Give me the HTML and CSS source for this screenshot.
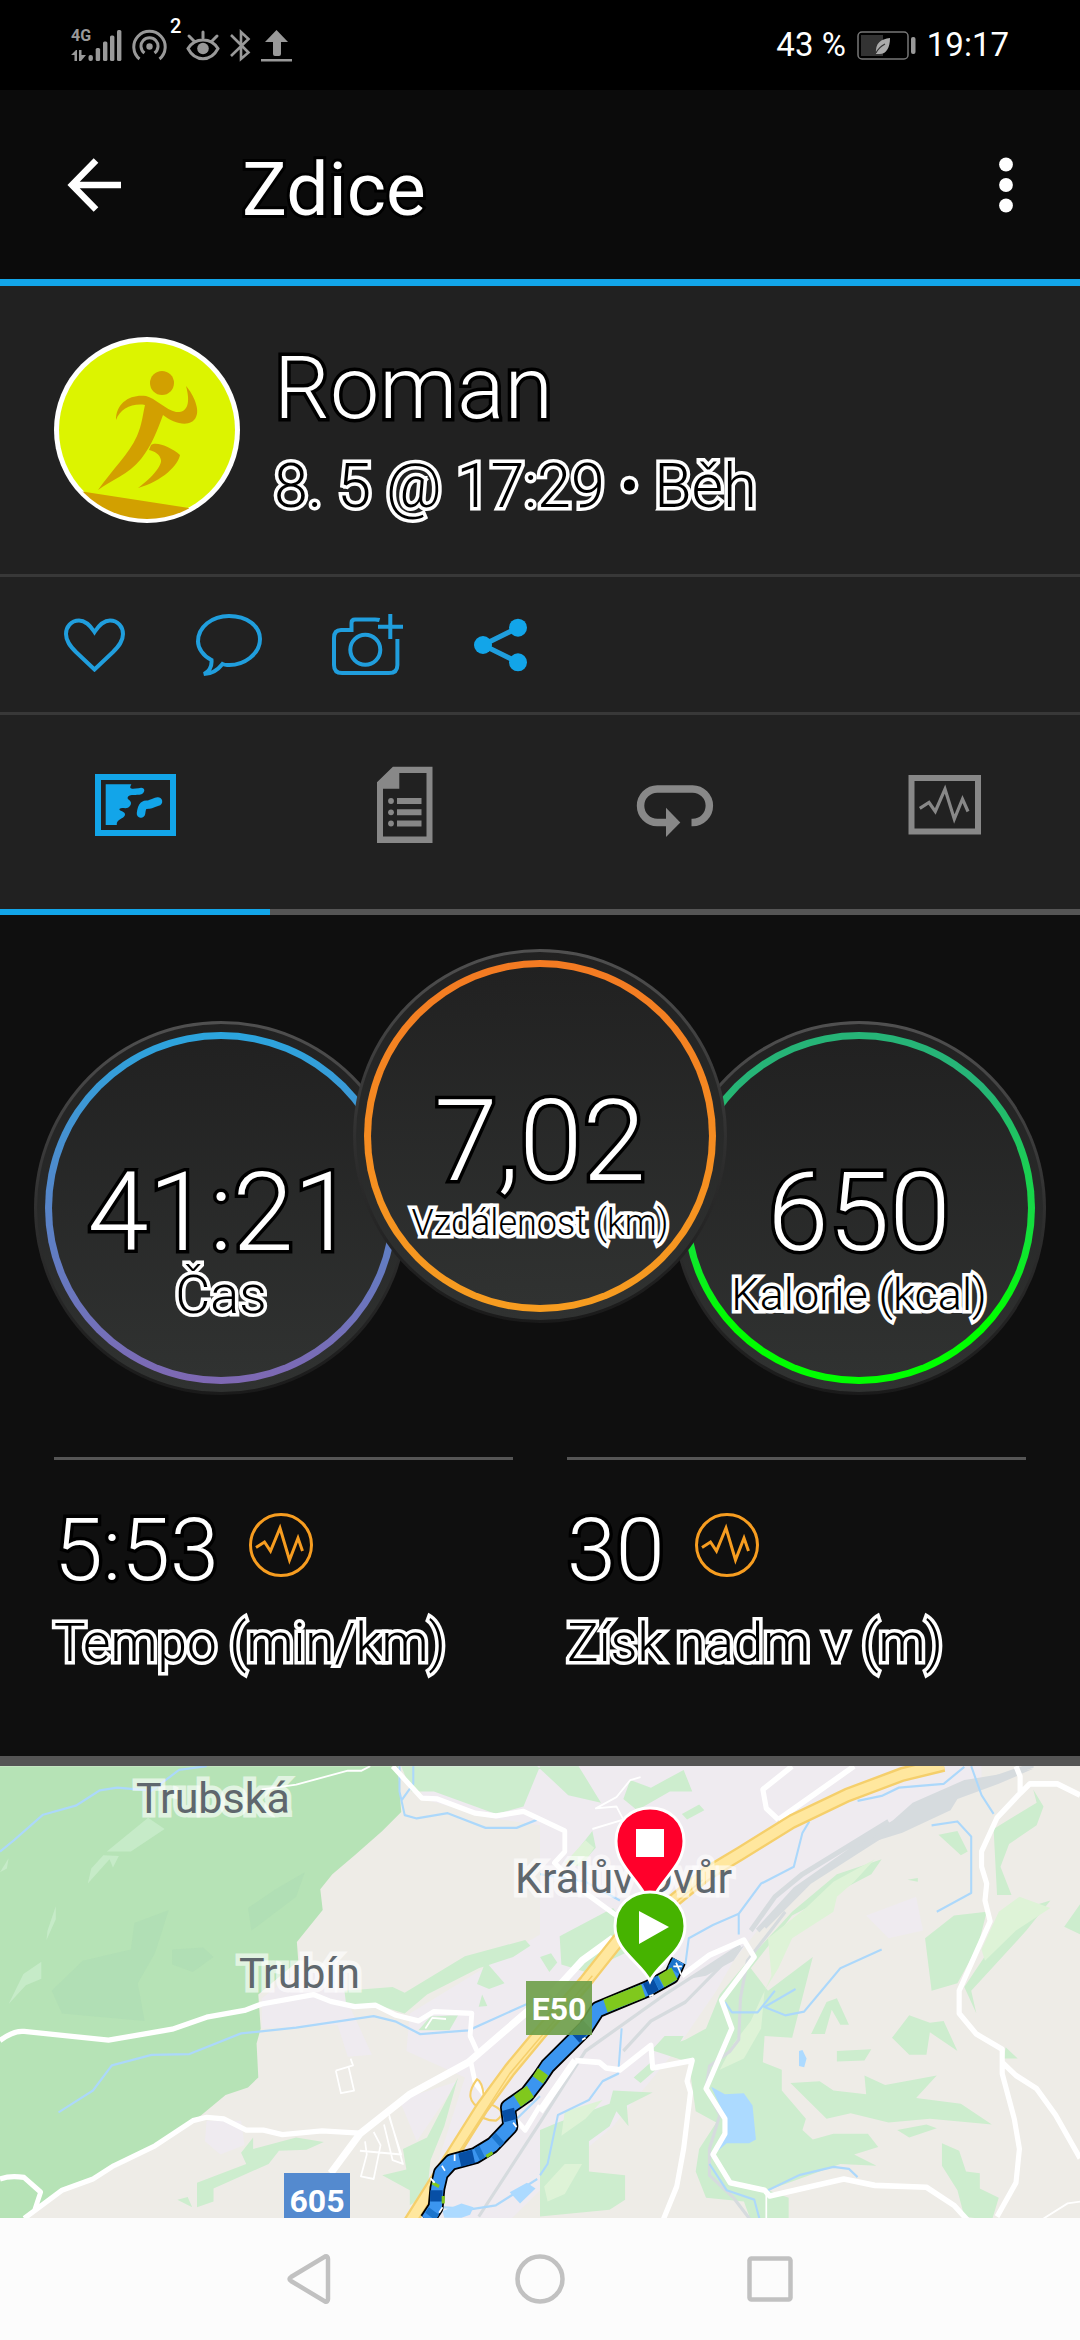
FILE: index.html
```html
<!DOCTYPE html>
<html lang="cs">
<head>
<meta charset="utf-8">
<meta name="viewport" content="width=device-width">
<title>Zdice</title>
<link rel="stylesheet" href="styles.css">
</head>
<body>
<div class="status">
  <div class="status-icons">
    <span class="network"><span class="network-type">4G</span>
      <svg width="51" height="33" viewBox="0 0 51 33" fill="#999"><path d="M0 26l5-5h1v11H3.500v-6zM8 21h2.500v5H15l-5 6H8z"/><rect x="17.500" y="26" width="4.400" height="6" rx="2"/><rect x="24.700" y="19" width="4.400" height="13" rx="1.500"/><rect x="32" y="12.500" width="4.400" height="19.500" rx="1.500"/><rect x="39" y="6.500" width="4.400" height="25.500" rx="1.500"/><rect x="46" y="1" width="4.400" height="31" rx="1.500"/></svg></span>
    <span class="hotspot"><svg width="35" height="33" viewBox="0 0 35 33" fill="none" stroke="#999" stroke-width="3"><circle cx="17.500" cy="17.500" r="3.200" fill="#999" stroke="none"/><path d="M12.500 24a8.500 8.500 0 1 1 10 0M7.500 30a15.700 15.700 0 1 1 20 0"/></svg><span class="hotspot-count">2</span></span>
    <svg width="34" height="33" viewBox="0 0 34 33" fill="none" stroke="#999" stroke-width="3" stroke-linecap="round"><path d="M2 19.500C9 8 25 8 32 19.500C25 33 9 33 2 19.500ZM17 9V3M8 12L3 7M26 12l5-5"/><circle cx="17" cy="19.500" r="5.800" fill="#999" stroke="none"/></svg>
    <svg width="21" height="33" viewBox="0 0 21 33" fill="none" stroke="#999" stroke-width="2.600"><path d="M1 6l17.500 17.500L11 30V3l7.500 7L1 27"/></svg>
    <svg width="31" height="33" viewBox="0 0 31 33" fill="#999"><path d="M15.500 1L27 13h-7v12q0 2-2 2h-4q-2 0-2-2V13H4zM0 30h31v2.500H0z"/></svg>
  </div>
  <div class="status-right">
    <span>43 %</span>
    <svg width="59" height="29" viewBox="0 0 59 29"><rect x="1" y="1" width="50" height="27" rx="4" fill="none" stroke="#777" stroke-width="1.500"/><rect x="4" y="4" width="22" height="21" fill="#333"/><rect x="54" y="6" width="4.500" height="17" rx="2" fill="#999"/><path d="M19 23C18 12 24 8 33 7C33 17 29 24 21 23Z" fill="#aaa"/><path d="M19 22Q22 16 28 13" fill="none" stroke="#333" stroke-width="1.200"/></svg>
    <time>19:17</time>
  </div>
</div>

<header class="header">
  <button class="plain" aria-label="Zpět"><svg width="54" height="54" viewBox="0 0 54 54" fill="none" stroke="#fff" stroke-width="6.500"><path d="M54 27H6M29 2.500L5 27l24 24.500"/></svg></button>
  <h1 class="title">Zdice</h1>
  <button class="plain" aria-label="Nabídka"><svg width="14" height="56" viewBox="0 0 14 56" fill="#fff"><circle cx="7" cy="7.500" r="6.900"/><circle cx="7" cy="28" r="6.900"/><circle cx="7" cy="48.500" r="6.900"/></svg></button>
</header>

<main>
  <section class="profile">
    <svg class="avatar" width="186" height="186" viewBox="0 0 186 186">
      <defs><clipPath id="face"><circle cx="93" cy="93" r="89"/></clipPath></defs>
      <circle cx="93" cy="93" r="93" fill="#fff"/><circle cx="93" cy="93" r="88" fill="#dcf400"/>
      <g fill="#d2a000"><path clip-path="url(#face)" d="M25 154L135 171V190H25Z"/><circle cx="108" cy="46" r="12"/>
      <path d="M62 83C62 66 76 57 92 59C101 61 112 73 122 75C133 76 137 67 132 49C140 58 146 73 142 80C137 91 120 87 109 78C103 94 98 108 87 122C74 138 57 143 44 153C58 133 75 117 83 99C88 88 89 76 91 68C78 66 66 72 62 83Z"/>
      <path d="M97 108C103 104 118 111 126 118C124 128 109 144 84 151C99 140 108 128 107 123C106 117 100 114 95 113Z"/></g>
    </svg>
    <div class="profile-text">
      <h2 class="name">Roman</h2>
      <p class="when outlined">8. 5 @ 17:29 • Běh</p>
    </div>
  </section>

  <div class="actions">
    <button class="plain" aria-label="To se mi líbí"><svg width="62" height="54" viewBox="0 0 62 54"><path d="M30.500 14C26 7 21 2.500 15 2.500C7 2.500 2 9 2 16C2 23 6 28 12 34L30.500 51.500L49 34C55 28 59 23 59 16C59 9 54 2.500 46 2.500C40 2.500 35 7 30.500 14Z"/></svg></button>
    <button class="plain" aria-label="Komentář"><svg width="66" height="62" viewBox="0 0 66 62"><path d="M15.500 46C7 42 2 34 2 27.500C2 13 16 2 33 2C51 2 64 12 64 25C64 40 48 52 31 51Q29 51 26.500 50C21 57 15 60 8 60C14 57 16 52 15.500 46Z"/></svg></button>
    <button class="plain" aria-label="Přidat fotku"><svg width="72" height="62" viewBox="0 0 72 62"><path d="M47.600 6Q46 5.500 43 5.500H23Q19.500 5.500 19.500 9V16H9Q2 16 2 24V51Q2 59 10 59H57Q65.400 59 65.400 51V25M58.300 0V25M46 12.700H71"/><circle cx="33.300" cy="35.700" r="15"/></svg></button>
    <button class="plain" aria-label="Sdílet"><svg width="54" height="54" viewBox="0 0 54 54"><path d="M44 9.700L9 27L44 44.300" stroke-width="5"/><g fill="#12a5e9" stroke="none"><circle cx="44" cy="9.700" r="9"/><circle cx="9" cy="27" r="9"/><circle cx="44" cy="44.300" r="9"/></g></svg></button>
  </div>

  <nav class="tabs" role="tablist">
    <button class="plain tab tab-active" role="tab" aria-selected="true" aria-label="Mapa"><svg width="90" height="80" viewBox="0 0 90 80" fill="currentColor"><path d="M8 12H83V68H8Z" fill="none" stroke="currentColor" stroke-width="6"/><path d="M15.700 19.300H41.400C38 25 43 24 48.600 23.300C53 21 57 25 52 29C49 31 36 28 37.900 34C43 37 41 41 37.900 42.700C35 44 32 42 29.600 43.700C28 46 36 46 35 50C34 54 26 54 26.800 60H15.700Z"/><path d="M51 48.500C52 40 54 39.500 59 39.500C62 39 65 37 68 36.500" fill="none" stroke="currentColor" stroke-width="8.500" stroke-linecap="round"/></svg></button>
    <button class="plain tab" role="tab" aria-label="Podrobnosti"><svg width="90" height="80" viewBox="0 0 90 80" fill="currentColor"><path fill-rule="evenodd" d="M17 17.300L32.900 1.700H72.500V78H17ZM39.300 8V23.700H23V71.500H66.500V8Z"/><circle cx="31" cy="36" r="2.900"/><circle cx="31" cy="47.300" r="2.900"/><circle cx="31" cy="58.500" r="2.900"/><path d="M37 33h24.500v6H37zM37 44.300h24.500v6H37zM37 55.500h24.500v6H37z"/></svg></button>
    <button class="plain tab" role="tab" aria-label="Kola"><svg width="90" height="80" viewBox="0 0 90 80" fill="currentColor"><path d="M61.500 57.500H62.600A16.700 16.700 0 0 0 62.600 24H27.300A16.700 16.700 0 0 0 27.300 57.500H38" fill="none" stroke="currentColor" stroke-width="7.500"/><path d="M36 42.700L50.300 57.500L36 72Z"/></svg></button>
    <button class="plain tab" role="tab" aria-label="Grafy"><svg width="90" height="80" viewBox="0 0 90 80" fill="none" stroke="currentColor"><path d="M11.500 13H78V66.500H11.500Z" stroke-width="6"/><path d="M19.800 43.300L29 37.500L35.300 46.500L45 24L54.300 54L62.500 34L68 46.500" stroke-width="3.200"/></svg></button>
  </nav>

  <section class="dials">
    <div class="dial"><div class="ring ring-time"><span class="dial-value">41:21</span><span class="dial-label outlined">Čas</span></div></div>
    <div class="dial dial-main"><div class="ring ring-distance"><span class="dial-value dial-value-main">7,02</span><span class="dial-label dial-label-small outlined">Vzdálenost (km)</span></div></div>
    <div class="dial"><div class="ring ring-calories"><span class="dial-value">650</span><span class="dial-label dial-label-medium outlined">Kalorie (kcal)</span></div></div>
  </section>

  <section class="stats">
    <div class="stat">
      <div class="stat-row"><span class="stat-value">5:53</span><svg class="pulse" width="64" height="64" viewBox="0 0 64 64"><circle cx="32" cy="32" r="30.500"/><path d="M7 34.500L15.500 29L21.500 38L31 15L40.500 47L49 25L53.500 38"/></svg></div>
      <p class="stat-label outlined">Tempo (min/km)</p>
    </div>
    <div class="stat">
      <div class="stat-row"><span class="stat-value">30</span><svg class="pulse" width="64" height="64" viewBox="0 0 64 64"><circle cx="32" cy="32" r="30.500"/><path d="M7 34.500L15.500 29L21.500 38L31 15L40.500 47L49 25L53.500 38"/></svg></div>
      <p class="stat-label outlined">Získ nadm v (m)</p>
    </div>
  </section>

  <svg class="map" viewBox="0 16 1080 452" preserveAspectRatio="xMidYMid slice" role="img" aria-label="Mapa trasy">
    <g transform="scale(.3444 .3763)" stroke-linejoin="round">
      <rect width="3140" height="1300" fill="#eeece7"/>
      <!-- built-up areas -->
      <g fill="#efebf0">
        <path d="M1200 40H1700L2850 40V90L2600 200L2250 420L2130 560L2080 640L1960 800L1780 1000L1600 1140L1480 1250H1190L1270 1100L1350 870L1180 800L1190 700L1440 560L1568 490V200L1420 180L1230 130Z"/>
        <path d="M760 660L860 590H1000L1010 670L1080 810L1010 815L980 730L760 740Z"/><path d="M600 985H700L710 1050L640 1075L595 1040ZM1160 930L1330 880L1210 1040ZM2515 440L2660 390L2680 480L2580 500Z"/>
      </g>
      <!-- forests -->
      <path fill="#b6e3b6" d="M0 43H1155L1165 165L1110 215L1030 280L965 330L930 370L937 425L862 510L866 560L750 650L757 740L745 780L750 870L720 897L655 917L585 970L440 1060L270 1140L170 1180L70 1250H0Z"/>
      <path fill="#aedcb4" opacity=".6" d="M720 420L800 370L885 325L860 390L730 480ZM240 560L380 530L390 460L490 425L450 540L400 620L420 720L180 700L150 640ZM500 530L590 525L620 550L560 590L500 570Z"/>
      <path fill="#c6ebc8" d="M310 270L430 180L478 210L380 270ZM255 355L265 315L300 280L345 282L328 312L318 290ZM135 505L138 480L162 415V450ZM25 675L68 595L120 563V608L75 625ZM0 325L25 288L20 315Z"/>
      <!-- light green fields -->
      <g fill="#cdedce">
        <path d="M1165 43H1560L1650 120L1745 140L1680 43H1568L1520 150L1440 170L1260 110L1195 110ZM1000 640L1140 630L1175 645L1350 548L1525 505L1540 520L1490 550L1390 580L1240 650L1175 700L1140 690L1085 675H1005ZM1385 622L1410 562L1465 620L1420 635ZM1400 650L1415 680L1390 682ZM1215 745L1250 708L1330 705L1305 745ZM700 1070L735 1030V1060L860 1030L940 1042L890 1062L810 1065L780 1100L620 1165V1200L572 1215V1150L715 1100ZM1170 1060L1240 1030L1330 870L1290 1000L1250 1090L1240 1180L1190 1210V1170L1110 1130L1180 1115ZM515 1195L545 1188L558 1215Z"/>
        <path d="M1830 80L1890 100L1985 53L2010 110L1945 110L1850 160L1810 130ZM1980 170L2030 145L2045 160L1995 185ZM1625 495L1780 420L1860 520L1700 590L1630 570ZM1660 285L1720 215L1730 260L1700 290ZM1568 550L1600 540L1618 565L1595 590Z"/>
        <path d="M2090 650L2050 740L1990 770L1900 800L2000 830L2020 960L2080 990L2030 1060L2020 1120L2050 1190L2160 1200L2180 1250H2290V1190L2230 1170L2440 1100L2545 1105L2480 1075L2550 1055L2520 1020H2420L2360 1035L2330 1010L2340 980L2270 905V850L2215 830L2220 760L2300 765L2360 550L2230 640L2180 580L2300 440L2530 330L2560 290L2430 330L2300 430L2190 540Z"/>
        <path d="M2686 500L2770 440L2865 430L2840 520L2780 620L2705 640ZM2725 225L2780 215L2810 270L2790 280ZM2885 210L3010 140L3000 105L3030 150L3010 200L2930 250L2905 310L2937 385H2895ZM2800 630L2880 520L2940 430L3050 400L2980 480L2820 640L2835 700ZM3090 470L3136 410V490ZM2355 755L2400 670L2430 660L2465 730L2440 730L2415 690L2395 755ZM2590 765L2640 705L2700 725L2740 720L2780 800L2700 750L2690 810H2640ZM2295 885L2380 880L2420 905L2515 915L2510 865L2570 890L2720 865L2660 925L2790 940L2880 995L2700 980L2580 990L2470 965L2400 980ZM2430 800L2530 795L2510 825L2430 828ZM2605 1010L2690 995L2720 1005L2640 1030ZM2735 1045L2785 1065L2805 1120L2845 1125V1165L2900 1190L2880 1250L2800 1240L2780 1170L2735 1105ZM2915 820L2920 790L2955 820ZM2635 345L2665 340V350Z"/>
        <path d="M1568 1010L1620 990L1770 940L1780 905L1895 910L1820 945L1825 1000L1790 960L1770 1000L1710 1040V1120L1815 1130V1195L1770 1222L1568 1240ZM1890 800L1930 760H1985L1960 800ZM1840 870L1890 830L1910 845L1860 885Z"/>
      </g>
      <path fill="#def3d7" d="M2180 720L2240 600L2230 500L2340 420L2420 350L2540 290L2480 350L2430 390L2420 430L2300 500L2260 580L2220 640L2210 740L2160 820L2090 850L2130 780ZM2850 530L2900 430L2960 390L3050 420L2950 480L2860 560ZM1640 960L1750 930L1700 980L1630 1025ZM1580 1160L1640 1100L1690 1100L1640 1180L1590 1200ZM1640 300L1700 240L1725 260L1690 310Z"/>
      <!-- railways -->
      <g fill="none" stroke="#d6dbde" stroke-width="9">
        <path d="M3000 40L2780 110L2560 210L2310 370L2200 480M2580 190L2330 330L2250 390L2180 480M2640 180L2350 350L2220 470" stroke-width="14"/>
        <path d="M2280 430L2170 560L2150 660L2145 770L2120 800L2060 840L2050 900L2090 970L2060 1060L2060 1130L2130 1190L2180 1250M2150 520L1930 650L1700 800L1568 990L1390 1240M2130 540L1990 670L1890 720L1810 800"/>
      </g>
      <path fill="#d6dbde" d="M2540 230L2650 140L2800 80L3000 50L2900 90L2780 130L2760 160L2620 220L2480 260ZM1990 610L2160 520L2130 560L2050 600Z"/>
      <!-- rivers and ponds -->
      <g fill="none" stroke="#acd8fb" stroke-width="6">
        <path d="M0 270L40 240L125 172L220 148L290 107L340 100L440 108L520 53L600 43M170 963L270 905L325 838L440 810L550 808L700 753L860 738L1085 707L1150 722L1220 755L1360 745L1530 675M1160 43V110L1175 173L1210 182L1300 168L1410 207H1500L1560 185M1200 43V90L1165 135"/>
        <path d="M2350 190L2330 220L2305 310L2210 355L2145 435L2070 465L2000 500L1990 570M2145 435V490M2800 45L2740 90L2610 100L2560 122L2490 135M2820 43L2850 120L2885 170M2705 200L2780 190L2820 230V380L2720 430M2560 530L2440 580L2335 695L2280 705L2220 683L2310 635M2105 670L2125 697H2200L2250 640M1805 740L1795 860L1750 880L1710 930L1620 970L1590 1100L1568 1130M2230 1170L2320 1130L2420 1108L2465 1113L2490 1135M2060 1100L2110 1170L2190 1195L2205 1245M1280 1215L1370 1220L1440 1210L1560 1140M1568 330L1700 350L1800 400M1568 920L1495 985"/>
      </g>
      <path fill="#acdaff" d="M2065 895L2105 915L2160 912L2185 945L2195 1035L2175 1045H2110L2065 1080L2105 1015L2095 955ZM2320 800L2330 797L2342 820L2335 843L2320 840ZM1285 1225L1340 1205L1375 1215L1365 1235L1340 1243H1290ZM1480 1175L1530 1150L1555 1165L1510 1205Z"/>
      <!-- local roads -->
      <g fill="none" stroke="#fff" stroke-width="14">
        <path d="M0 772Q40 745 70 748L315 771L500 742L600 710L710 692L760 675L910 650L960 668L1030 682L1090 678L1150 705L1215 720L1260 695L1370 700L1365 760L1385 800M0 1140Q30 1130 70 1136L118 1175L100 1225M70 1245L180 1170L270 1140L330 1105L450 1052L560 985L600 976L650 980L715 1010H765L820 1022L935 1012L1045 1018M1140 43L1225 128L1270 130L1380 168L1440 175L1520 163L1640 215L1640 270L1610 300L1700 380L1790 440M1365 820L1380 885L1410 920M1495 980L1525 1010L1568 945"/>
        <path d="M2300 43L2215 105L2225 155L2260 185M2480 43L2260 185M1980 600L2060 545L2160 505L2190 550L2095 665L2125 740L2050 900L2105 980V1020L2070 1075L2120 1150L2220 1170L2235 1185L2450 1140L2540 1157L2690 1162L2770 1210L2810 1250M1670 825L1740 830L1760 845L1800 850L1890 785L1895 845L2010 825L1995 880L2005 910L1985 1060L1965 1160L1925 1250M2950 43L2962 70V115L2895 180L2850 270V310L2865 355L2860 400L2875 455L2785 640L2785 700L2835 755L2910 795L2910 860L2945 980L2960 1060L2950 1150L2895 1240M2910 830L2950 865L3010 900L3065 970L3136 1085M2962 115L2990 90H3070L3136 120" stroke-width="15"/>
        <path d="M960 1125L1045 1020L1190 915L1360 830L1550 680M1780 500L1690 560L1600 650M1670 825L1568 960" stroke-width="20"/>
        <path d="M760 105L860 92L1010 55H1050L1075 43M1045 1065L1165 1075L1130 975M1085 1015L1105 1050L1085 1140L1048 1133L1065 1075L1060 1040M1115 995L1140 1090L1170 1100L1130 970M975 852L1025 838L1018 820M975 852L990 912L1028 905L1012 842M1235 740L1255 712L1295 715M1720 210L1810 185L1790 150L1730 155L1790 125L1830 80L1860 72M2225 1180V1245M3030 1245L3100 1205L3136 1200" stroke-width="5"/>
      </g>
      <!-- motorway -->
      <g fill="none">
        <path d="M1190 1255L1400 950L1480 850L1580 740L1700 615L1800 500L1930 420L2050 330L2150 275L2300 190L2460 120L2620 65L2740 38M1400 955Q1340 930 1385 875Q1400 880 1405 920M1420 940Q1480 960 1440 985Q1400 985 1380 960" stroke="#f5cf6b" stroke-width="6"/>
        <path d="M1190 1255L1400 950L1480 850L1580 740L1700 615L1800 500L1930 420L2050 330L2150 275L2300 190L2460 120L2620 65L2740 38" stroke="#f5cf6b" stroke-width="40"/>
        <path d="M1190 1255L1400 950L1480 850L1580 740L1700 615L1800 500L1930 420L2050 330L2150 275L2300 190L2460 120L2620 65L2740 38" stroke="#ffe79e" stroke-width="27"/>
        <path d="M2040 345L1910 445M1720 600L1480 860L1250 1185" stroke="#f5cf6b" stroke-width="4"/>
      </g>
      <!-- recorded run -->
      <g fill="none">
        <path d="M1240 1250L1265 1215L1270 1165L1280 1125L1310 1095L1380 1078L1430 1050L1482 1000L1475 950L1530 915L1568 870L1590 840L1700 740L1735 690L1880 635L1950 600L1970 560" stroke="#000" stroke-width="46"/>
        <path d="M1240 1250L1265 1215L1270 1165L1280 1125L1310 1095L1380 1078L1430 1050L1482 1000L1475 950L1530 915L1568 870L1590 840L1700 740L1735 690L1880 635L1950 600L1970 560" stroke="#3b95ef" stroke-width="36"/>
        <path d="M1267 1200V1170M1335 1090L1375 1080M1482 985L1475 955M1670 765L1705 730M1875 637L1905 622" stroke="#074fa5" stroke-width="36"/>
        <path d="M1385 1075L1400 1067M1440 1042L1452 1030M1250 1240L1260 1225M1905 622L1917 615M1955 585L1970 563" stroke="#1c75cc" stroke-width="36"/>
        <path d="M1502 933L1540 907M1562 877L1577 855M1758 680L1868 640M1920 615L1958 594" stroke="#80c81d" stroke-width="36"/>
        <path d="M1287 1185V1205M1412 1080L1430 1070M1255 1150L1275 1160" stroke="#80c81d" stroke-width="9"/>
        <path d="M1250 1138L1262 1150M1320 1075V1092M1283 1105L1292 1118M1490 990L1500 1002M1285 1215L1275 1230M1690 770L1700 765M1885 655L1898 650M1955 575L1980 575M1963 565L1978 597" stroke="#fff" stroke-width="5"/>
      </g>
    </g>
    <g class="place"><text x="136" y="63">Trubská</text><text x="239" y="238">Trubín</text><text x="515" y="143">Králův Dvůr</text></g>
    <g class="road-sign"><rect x="526" y="231" width="66" height="54" fill="#6d9e48" fill-opacity=".9"/><rect x="284" y="423" width="66" height="54" fill="#4b85cd" fill-opacity=".95"/><text x="559" y="270">E50</text><text x="317" y="462">605</text></g>
    <g stroke="#fff" stroke-width="3">
      <path fill="#ff002b" d="M650 160C646 132 616 120 616 91C616 71 631 58 650 58S684 71 684 91C684 120 654 132 650 160Z"/>
      <path fill="#46b300" d="M650 231C642 213 615 202 615 176C615 155 631 142 650 142S685 155 685 176C685 202 658 213 650 231Z"/>
    </g>
    <path fill="#fff" d="M636 79h28v28h-28zM639 161v33l30-17z"/>
  </svg>
</main>

<footer class="system-nav">
  <button class="plain" aria-label="Zpět"><svg width="50" height="50" viewBox="0 0 50 50"><path d="M40 2.500Q43 1.500 43 5V45Q43 48.500 40 47.500L6 27Q3 25 6 23Z"/></svg></button>
  <button class="plain" aria-label="Domů"><svg width="50" height="50" viewBox="0 0 50 50"><circle cx="25" cy="25" r="22.500"/></svg></button>
  <button class="plain" aria-label="Poslední aplikace"><svg width="50" height="50" viewBox="0 0 50 50"><rect x="4.500" y="4.500" width="41" height="41" rx="2"/></svg></button>
</footer>
</body>
</html>
```
FILE: styles.css
```css
* { box-sizing: border-box; }
body { margin: 0; min-height: 100vh; display: flex; flex-direction: column; background: #0f0f0f; color: #fff; font-family: Roboto, "Noto Sans", sans-serif; }
h1, h2, p { margin: 0; font-weight: 300; }
svg { display: block; flex: none; }
.plain { appearance: none; border: 0; padding: 0; margin: 0; background: none; color: inherit; font: inherit; }

.status { height: 90px; padding: 0 71px; background: #000; display: flex; align-items: center; justify-content: space-between; }
.status-icons { display: flex; align-items: center; gap: 10px; }
.network, .hotspot { position: relative; }
.network-type { position: absolute; left: 0; top: -2px; color: #999; font-size: 16px; line-height: 18px; font-weight: 700; }
.hotspot { margin-right: 9px; }
.hotspot-count { position: absolute; left: 38px; top: -14px; font-size: 20px; line-height: 22px; font-weight: 500; }
.status-right { display: flex; align-items: center; gap: 11px; font-size: 33px; line-height: 40px; }

.header { height: 196px; padding: 0 67px; background: #0b0b0b; border-bottom: 7px solid #12a5e9; display: flex; align-items: center; }
.title { flex: 1; margin-left: 121px; padding-top: 8px; font-size: 75px; line-height: 90px; font-weight: 400; -webkit-text-stroke: 6px #000; paint-order: stroke fill; }

.profile { height: 291px; padding: 0 54px; background: #212121; border-bottom: 3px solid #383838; display: flex; align-items: center; gap: 34px; }
.profile-text { padding-top: 4px; }
.name, .dial-value, .stat-value { font-weight: 300; -webkit-text-stroke: 7px #000; paint-order: stroke fill; }
.name { font-size: 88px; line-height: 100px; }
.outlined { color: #000; font-weight: 300; -webkit-text-stroke: 7px #fff; paint-order: stroke fill; }
.when { margin-top: 8px; font-size: 61px; line-height: 80px; }

.actions { height: 138px; padding: 0 64px; background: #212121; border-bottom: 3px solid #383838; display: flex; align-items: center; gap: 70px; }
.actions svg { fill: none; stroke: #209edd; stroke-width: 4px; }

.tabs { height: 200px; background: #212121; display: grid; grid-template-columns: repeat(4, 1fr); }
.tab { display: flex; justify-content: center; align-items: center; padding-bottom: 14px; color: #888; border-bottom: 6px solid #555; }
.tab-active { color: #12a5e9; border-color: #12a5e9; }

.dials { padding-top: 34px; display: flex; justify-content: center; align-items: flex-end; }
.dial { width: 374px; height: 374px; border: 3px solid transparent; border-radius: 50%; padding: 8px; background: linear-gradient(#212121, #303231) padding-box, linear-gradient(#505050, #303030 50%, #1a1a1a) border-box; }
.dial-main { position: relative; z-index: 1; margin: 0 -55px 72px; }
.ring { height: 100%; padding-top: 120px; border: 7px solid transparent; border-radius: 50%; display: flex; flex-direction: column; align-items: center; white-space: nowrap; }
.ring-time { background: linear-gradient(#212121, #303231) padding-box, linear-gradient(#2ba5de, #5784c8 50%, #7f68b3) border-box; }
.ring-distance { background: linear-gradient(#212121, #303231) padding-box, linear-gradient(#f37a22, #f79d20) border-box; }
.ring-calories { background: linear-gradient(#212121, #303231) padding-box, linear-gradient(#26b477 15%, #12e238 58%, #00ff00 82%) border-box; }
.dial-value { font-size: 110px; line-height: 108px; }
.dial-value-main { font-size: 114px; }
.dial-label { font-size: 54px; line-height: 56px; }
.dial-label-medium { font-size: 45px; }
.dial-label-small { font-size: 36px; }

.stats { padding: 62px 54px 83px; display: grid; grid-template-columns: 1fr 1fr; gap: 54px; border-bottom: 10px solid #555; }
.stat { padding-top: 40px; border-top: 3px solid #555; }
.stat-row { display: flex; align-items: center; gap: 30px; }
.stat-value { font-size: 88px; line-height: 100px; }
.pulse { margin-bottom: 10px; fill: none; stroke: #f79d20; stroke-width: 3px; }
.stat-label { margin-top: 13px; font-size: 53px; line-height: 60px; white-space: nowrap; }

.map { width: 100%; height: 452px; }
.place { font-size: 43px; fill: #5f676d; stroke: rgba(255, 255, 255, .6); stroke-width: 9px; paint-order: stroke fill; }
.road-sign { font-size: 32px; font-weight: 700; fill: #fff; text-anchor: middle; }

.system-nav { flex: 1; min-height: 122px; background: #fcfcfc; display: flex; justify-content: center; align-items: center; gap: 180px; }
.system-nav svg { fill: none; stroke: #c1c1c1; stroke-width: 4.5px; }
```
